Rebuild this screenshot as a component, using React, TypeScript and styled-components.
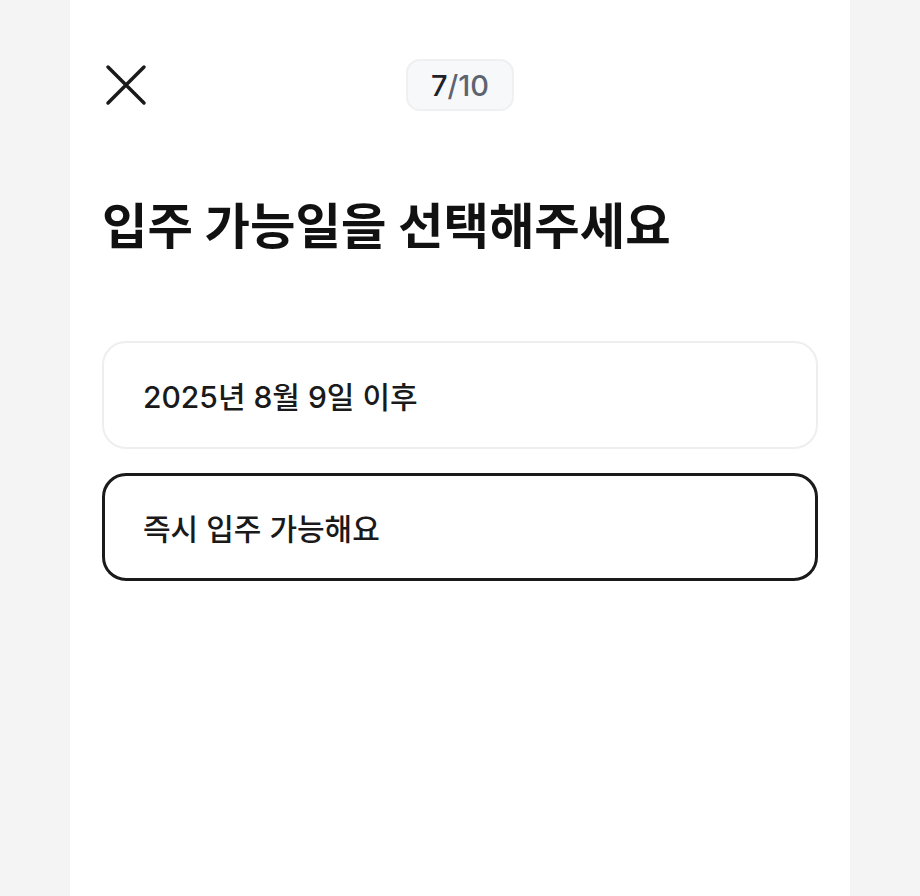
import React from 'react';
import styled, { createGlobalStyle } from 'styled-components';

const GlobalStyle = createGlobalStyle`
  html, body {
    margin: 0;
    padding: 0;
    background: #f4f4f4;
  }

  body {
    font-family: Inter, "Noto Sans CJK KR", "Noto Sans", sans-serif;
    color: #1a1a1a;
  }
`;

const Screen = styled.div`
  width: 780px;
  min-height: 100vh;
  margin: 0 auto;
  background: #ffffff;
  padding: 59px 32px 0;
  box-sizing: border-box;
`;

const Header = styled.header`
  display: grid;
  grid-template-columns: 1fr auto 1fr;
  align-items: center;
  height: 52px;
`;

const CloseButton = styled.button`
  display: flex;
  align-items: center;
  justify-content: center;
  width: 48px;
  height: 48px;
  padding: 0;
  border: none;
  background: none;
  color: #1a1a1a;
  cursor: pointer;
  justify-self: start;
`;

const Progress = styled.div`
  display: flex;
  align-items: center;
  height: 52px;
  padding: 0 23px;
  box-sizing: border-box;
  border: 2px solid #eef0f2;
  border-radius: 14px;
  background: #f7f8fa;
  font-size: 29px;
  font-weight: 500;
  color: #5d6470;

  strong {
    font-weight: 500;
    color: #1f2329;
  }
`;

const Title = styled.h1`
  margin: 81px 0 0;
  font-size: 49.4px;
  font-weight: 700;
  line-height: 1.4;
  color: #111111;
`;

const Options = styled.div`
  display: flex;
  flex-direction: column;
  gap: 24px;
  margin-top: 80px;
`;

const Option = styled.button<{ $selected?: boolean }>`
  display: flex;
  align-items: center;
  height: 108px;
  box-sizing: border-box;
  padding: 0 ${(p) => (p.$selected ? 38 : 39)}px;
  border: ${(p) => (p.$selected ? '3px solid #1a1a1a' : '2px solid #eeeeee')};
  border-radius: 24px;
  background: #ffffff;
  font-family: inherit;
  font-size: 30px;
  font-weight: 500;
  color: #1a1a1a;
  text-align: left;
  cursor: pointer;
`;

const options = [
  { label: '2025년 8월 9일 이후', selected: false },
  { label: '즉시 입주 가능해요', selected: true },
];

const App: React.FC = () => (
  <>
    <GlobalStyle />
    <Screen>
      <Header>
        <CloseButton aria-label="닫기">
          <svg width="48" height="48" viewBox="0 0 24 24" fill="none">
            <path
              d="M3 3L21 21M21 3L3 21"
              stroke="currentColor"
              strokeWidth="1.75"
              strokeLinecap="round"
            />
          </svg>
        </CloseButton>
        <Progress>
          <strong>7</strong>/10
        </Progress>
        <span />
      </Header>
      <Title>입주 가능일을 선택해주세요</Title>
      <Options>
        {options.map((o) => (
          <Option key={o.label} $selected={o.selected}>
            {o.label}
          </Option>
        ))}
      </Options>
    </Screen>
  </>
);

export default App;
